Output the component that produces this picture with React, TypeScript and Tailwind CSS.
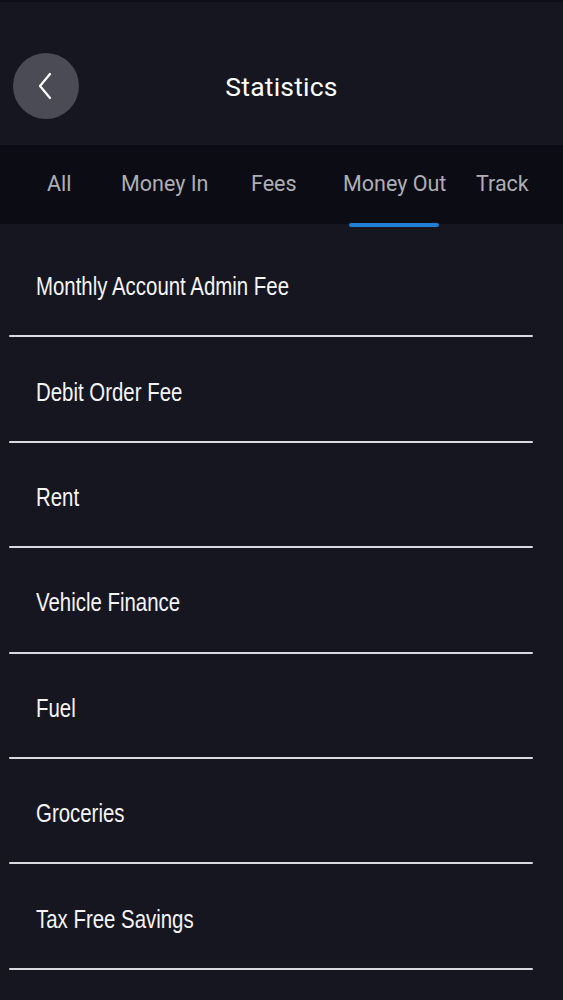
import React from "react";

const items = [
  "Monthly Account Admin Fee",
  "Debit Order Fee",
  "Rent",
  "Vehicle Finance",
  "Fuel",
  "Groceries",
  "Tax Free Savings",
];

export default function App() {
  return (
    <div className="w-[563px] h-[1000px] overflow-hidden bg-[#161620] flex flex-col" style={{ fontFamily: "Roboto, 'Noto Sans', sans-serif" }}>
      <div className="h-[2px] bg-[#0e0e16]" />
      <div className="h-[143px] relative">
        <div className="absolute left-[13px] top-[51px] w-[66px] h-[66px] rounded-full bg-[#4b4b55] flex items-center justify-center">
          <svg width="26" height="30" viewBox="0 0 26 30" fill="none">
            <path d="M17 3 L7 15 L17 27" stroke="#ffffff" strokeWidth="2.2" strokeLinecap="round" strokeLinejoin="round" />
          </svg>
        </div>
        <div className="pt-[67px] w-full text-center text-white text-[26.5px] leading-[36px] tracking-[0.2px]">Statistics</div>
      </div>
      <div className="h-[79px] bg-[#0c0c14] text-[21.5px] leading-[28px] text-[#aeaeb6] relative">
        <span className="absolute left-[47px] top-[25px]">All</span>
        <span className="absolute left-[121px] top-[25px]">Money In</span>
        <span className="absolute left-[251px] top-[25px]">Fees</span>
        <span className="absolute left-[343px] top-[25px]">Money Out</span>
        <span className="absolute left-[476px] top-[25px]">Track</span>
        <div className="absolute left-[349px] bottom-[-3px] w-[90px] h-[4px] rounded-full bg-[#1f80d4]" />
      </div>
      <div className="flex flex-col pt-[8px] pl-[9px] w-[533px]" style={{ fontFamily: "'Liberation Sans', Arial, sans-serif" }}>
        {items.map((t) => (
          <div key={t} className="h-[105.4px] flex flex-col">
            <div className="flex-1 flex items-center pl-[27px] text-[26px] text-[#f4f4f6]">
              <span className="inline-block origin-left scale-x-[0.785] whitespace-nowrap mt-[6px]">{t}</span>
            </div>
            <div className="h-[2px] bg-[#d9d9e0] rounded-full" />
          </div>
        ))}
      </div>
    </div>
  );
}
